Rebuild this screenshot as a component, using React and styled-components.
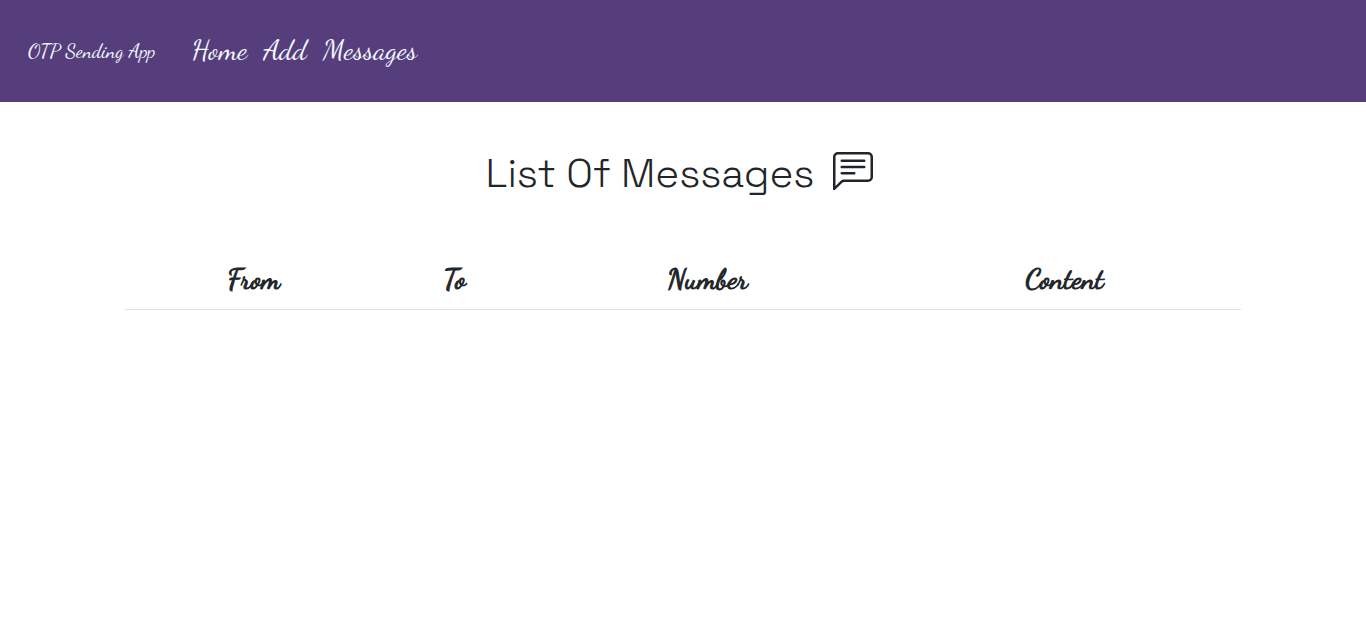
import React from "react";
import styled, { createGlobalStyle } from "styled-components";
import { BsChatLeftText } from "react-icons/bs";

const script = '"Dancing Script", "Liberation Serif", cursive';

const GlobalStyle = createGlobalStyle`
  *, *::before, *::after { box-sizing: border-box; }
  body {
    margin: 0;
    background: #fff;
    color: #212529;
    font-family: "Space Grotesk", Inter, "Liberation Sans", sans-serif;
  }
`;

const Navbar = styled.header`
  display: flex;
  align-items: center;
  gap: 36px;
  min-height: 102px;
  padding: 24px 28px;
  background: #563d7c;
  font-family: ${script};
`;

const Brand = styled.a`
  color: aliceblue;
  font-size: 20px;
  line-height: 28px;
  text-decoration: none;
  white-space: nowrap;
`;

const NavLinks = styled.nav`
  display: flex;
  gap: 16px;
  padding-bottom: 2px;
`;

const NavLink = styled.a`
  color: aliceblue;
  font-size: 29px;
  line-height: 36px;
  text-decoration: none;
`;

const Content = styled.main`
  width: 82%;
  max-width: 1116px;
  margin: 0 auto;
  padding-top: 48px;
`;

const Title = styled.h1`
  display: flex;
  justify-content: center;
  gap: 19px;
  margin: 0 0 56px;
  padding-right: 7px;
  font-size: 40px;
  font-weight: 300;
  line-height: 48px;
`;

const TitleIcon = styled(BsChatLeftText)`
  flex: none;
  width: 40px;
  height: 40px;
  margin-top: 2px;
`;

const Table = styled.table`
  width: 100%;
  table-layout: fixed;
  border-collapse: collapse;
`;

const HeaderCell = styled.th`
  width: ${({ $share }) => $share}%;
  padding: 7px 8px 12px;
  border-bottom: 1px solid #dee2e6;
  font-family: ${script};
  font-size: 29px;
  font-weight: 400;
  -webkit-text-stroke: 1px currentColor;
  line-height: 36px;
  text-align: center;
`;

const columns = [
  { label: "From", share: 23.1 },
  { label: "To", share: 12.9 },
  { label: "Number", share: 32.4 },
  { label: "Content", share: 31.6 },
];

export default function App() {
  return (
    <>
      <GlobalStyle />
      <Navbar>
        <Brand href="#home">OTP Sending App</Brand>
        <NavLinks aria-label="Main">
          <NavLink href="#home">Home</NavLink>
          <NavLink href="#add">Add</NavLink>
          <NavLink href="#messages">Messages</NavLink>
        </NavLinks>
      </Navbar>
      <Content>
        <Title>
          List Of Messages
          <TitleIcon aria-hidden="true" />
        </Title>
        <Table>
          <thead>
            <tr>
              {columns.map(({ label, share }) => (
                <HeaderCell key={label} scope="col" $share={share}>
                  {label}
                </HeaderCell>
              ))}
            </tr>
          </thead>
          <tbody />
        </Table>
      </Content>
    </>
  );
}
